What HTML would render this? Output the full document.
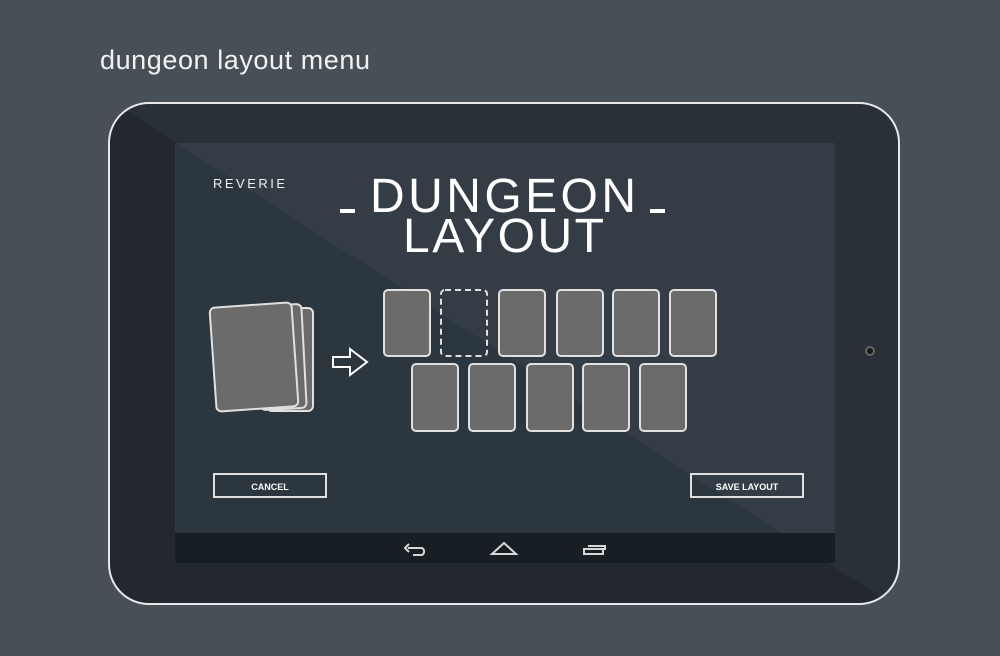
<!DOCTYPE html>
<html><head><meta charset="utf-8"><style>
html,body{margin:0;padding:0;background:#474f57;}
svg{display:block}
</style></head><body>
<svg width="1000" height="656" viewBox="0 0 1000 656" xmlns="http://www.w3.org/2000/svg" font-family="Liberation Sans, sans-serif">
<defs>
<clipPath id="up"><polygon points="0,0 1000,0 1000,674 0,29"/></clipPath>
<clipPath id="tab"><rect x="109" y="103" width="790" height="501" rx="40"/></clipPath>
</defs>
<rect width="1000" height="656" fill="#474f57"/>
<text x="100" y="69" font-size="27" fill="#f2f2f2" textLength="270">dungeon layout menu</text>
<g clip-path="url(#tab)">
<rect x="109" y="103" width="790" height="501" fill="#22282d"/>
<rect x="109" y="103" width="790" height="501" fill="#2a3037" clip-path="url(#up)"/>
<rect x="175" y="143" width="660" height="390" fill="#2b363e"/>
<rect x="175" y="143" width="660" height="390" fill="#343d45" clip-path="url(#up)"/>
<rect x="175" y="533" width="660" height="30" fill="#171f24"/>
</g>
<rect x="109" y="103" width="790" height="501" rx="40" fill="none" stroke="#e8e8e8" stroke-width="2"/>
<circle cx="870" cy="351" r="5" fill="#666"/><circle cx="870" cy="351" r="3" fill="#1a1a1a"/>
<text x="213" y="188" font-size="13" fill="#f0f0f0" letter-spacing="2.5">REVERIE</text>
<text x="370" y="212" font-size="48" fill="#fff" textLength="266" lengthAdjust="spacing">DUNGEON</text>
<text x="403" y="252" font-size="48" fill="#fff" textLength="201" lengthAdjust="spacing">LAYOUT</text>
<rect x="340" y="209" width="15" height="4" fill="#fff"/>
<rect x="650" y="209" width="15" height="4" fill="#fff"/>
<g fill="#6b6b6b" stroke="#e0e0e0" stroke-width="2">
<rect x="267" y="308" width="46" height="103" rx="5"/>
<rect x="258" y="305" width="46" height="104" rx="5" transform="rotate(-3 281 357)"/>
<rect x="213" y="305" width="82" height="104" rx="5" transform="rotate(-4 254 357)"/>
<rect x="384" y="290" width="46" height="66" rx="4"/>
<rect x="499" y="290" width="46" height="66" rx="4"/>
<rect x="557" y="290" width="46" height="66" rx="4"/>
<rect x="613" y="290" width="46" height="66" rx="4"/>
<rect x="670" y="290" width="46" height="66" rx="4"/>
<rect x="412" y="364" width="46" height="67" rx="4"/>
<rect x="469" y="364" width="46" height="67" rx="4"/>
<rect x="527" y="364" width="46" height="67" rx="4"/>
<rect x="583" y="364" width="46" height="67" rx="4"/>
<rect x="640" y="364" width="46" height="67" rx="4"/>
</g>
<rect x="441" y="290" width="46" height="66" rx="4" fill="none" stroke="#e0e0e0" stroke-width="2" stroke-dasharray="6,4"/>
<path d="M333 357 V367 H350 V375 L367 362 L350 349 V357 Z" fill="none" stroke="#fff" stroke-width="2"/>
<rect x="214" y="474" width="112" height="23" fill="none" stroke="#e0e0e0" stroke-width="2"/>
<text x="270" y="490" font-size="9" font-weight="bold" fill="#fff" text-anchor="middle">CANCEL</text>
<rect x="691" y="474" width="112" height="23" fill="none" stroke="#e0e0e0" stroke-width="2"/>
<text x="747" y="490" font-size="9" font-weight="bold" fill="#fff" text-anchor="middle">SAVE LAYOUT</text>
<g fill="none" stroke="#d8d8d8" stroke-width="2">
<path d="M408 548 H422 A4 4 0 0 1 422 555 H413"/>
<path d="M409 544 L405 548 L409 552"/>
<path d="M492 554 L504 543 L516 554 Z"/>
<rect x="584" y="549" width="19" height="5"/>
<path d="M588 546 H605 V550"/>
</g>
</svg>
</body></html>
